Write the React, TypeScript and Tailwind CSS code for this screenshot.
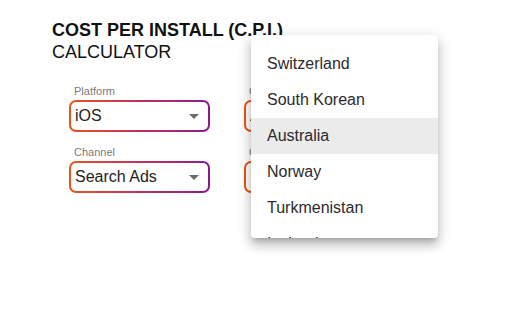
import React from "react";

const countries = ["Switzerland", "South Korean", "Australia", "Norway", "Turkmenistan", "Iceland"];

function Field({ label, value }: { label: string; value: string }) {
  return (
    <div className="flex flex-col">
      <span className="pl-[5px] text-[11px] leading-[13px] text-[#7a7a7a]">{label}</span>
      <div className="mt-[2px] rounded-[7px] bg-gradient-to-r from-[#ea540a] via-[#c0305a] to-[#8a1790] p-[2px]">
        <div className="flex h-[28px] items-center justify-between rounded-[5px] bg-white pl-[4px] pr-[9px]">
          <span className="text-[16px] text-[#222]">{value}</span>
          <svg width="10" height="5" viewBox="0 0 10 5">
            <path d="M0 0 L10 0 L5 5 Z" fill="#6b6b6b" />
          </svg>
        </div>
      </div>
    </div>
  );
}

export default function App() {
  return (
    <div className="relative h-[318px] w-[525px] overflow-hidden bg-white" style={{ fontFamily: '"Liberation Sans", Arial, sans-serif' }}>
      <div className="flex flex-col pl-[52px] pt-[19px]">
        <h1 className="text-[18px] font-semibold leading-[22px] text-[#111]">COST PER INSTALL (C.P.I.)</h1>
        <p className="text-[18px] leading-[22px] text-[#111]">CALCULATOR</p>

        <div className="mt-[22px] ml-[17px] grid w-[316px] grid-cols-2 gap-x-[34px] gap-y-[14px]">
          <Field label="Platform" value="iOS" />
          <Field label="Country" value="Australia" />
          <Field label="Channel" value="Search Ads" />
          <Field label="Currency" value="USD" />
        </div>
      </div>

      <div className="absolute left-[251px] top-[35px] h-[203px] w-[187px] overflow-hidden rounded-[4px] bg-white pt-[11px] shadow-[0_5px_5px_-3px_rgba(0,0,0,0.2),0_8px_10px_1px_rgba(0,0,0,0.14),0_3px_14px_2px_rgba(0,0,0,0.12)]">
        {countries.map((c) => (
          <div
            key={c}
            className={
              "flex h-[36px] items-center px-[16px] text-[16px] text-[#2b2b2b] " +
              (c === "Australia" ? "bg-[#ebebeb]" : "")
            }
          >
            {c}
          </div>
        ))}
      </div>
    </div>
  );
}
